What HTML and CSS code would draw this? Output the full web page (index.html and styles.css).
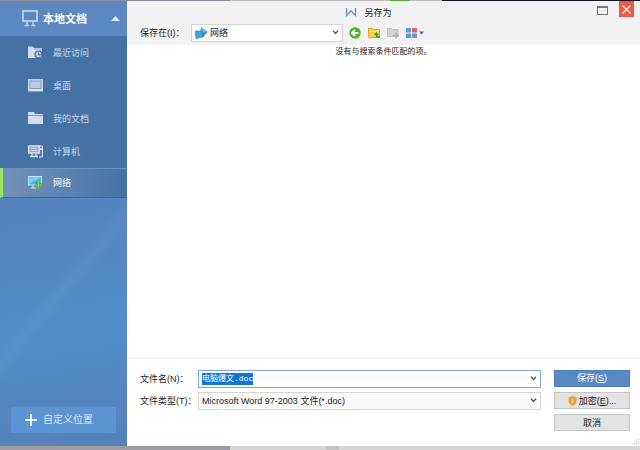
FILE: index.html
```html
<!DOCTYPE html>
<html lang="zh-CN">
<head>
    <meta charset="UTF-8">
    <meta name="viewport" content="width=device-width, initial-scale=1.0">
    <title>另存为</title>
    <link rel="stylesheet" href="styles.css">
</head>
<body>
    <div class="dialog">
        <aside class="sidebar">
            <button type="button" class="group">
                <svg class="group-icon" width="16" height="17" viewBox="0 0 16 17" fill="none" stroke="#b9d3ef">
                    <rect x="1" y="1" width="14" height="10" stroke-width="1.8"/>
                    <path d="M5 11v4M11 11v4M2.500 15.500h4.500M9 15.500h4.500" stroke-width="1.500"/>
                </svg>
                <span class="group-name">本地文档</span>
                <svg width="9" height="5" viewBox="0 0 9 5"><path d="M0 5L4.500 0L9 5z" fill="#dbe8f7"/></svg>
            </button>
            <nav class="places">
                <a class="place" href="#">
                    <svg width="15" height="13" viewBox="0 0 15 13">
                        <path d="M0 0.500h5l1 1.500h8v10H0z" fill="#cfdff1"/>
                        <path d="M6 3h8" stroke="#8dabcd"/>
                        <circle cx="10.500" cy="8.500" r="3.500" fill="#b4cae4" stroke="#3c6798" stroke-width="1.200"/>
                        <path d="M10.500 6.500v2.300h2" stroke="#35618f" fill="none"/>
                    </svg>
                    最近访问
                </a>
                <a class="place" href="#">
                    <svg width="15" height="13" viewBox="0 0 15 13">
                        <rect x="0.500" y="0.500" width="14" height="11.500" fill="#c9d9ec" stroke="#c3d6ec"/>
                        <rect x="2" y="2" width="11" height="7.500" fill="#bccde2" stroke="#7f9dc2"/>
                        <path d="M1 11h13" stroke="#e3ecf7"/>
                    </svg>
                    桌面
                </a>
                <a class="place" href="#">
                    <svg width="15" height="13" viewBox="0 0 15 13">
                        <path d="M0 0h6l1 2h8v10H0z" fill="#cfdff1"/>
                        <path d="M0 3.500h15" stroke="#7f9dc2"/>
                    </svg>
                    我的文档
                </a>
                <a class="place" href="#">
                    <svg width="15" height="13" viewBox="0 0 15 13" fill="none">
                        <path d="M10 1h4.500v11H11" fill="#5a83b3" stroke="#dbe7f5"/>
                        <rect x="0.700" y="1" width="10.500" height="7" fill="#8dabcd" stroke="#dbe7f5" stroke-width="1.400"/>
                        <path d="M3 3.500h6M3 5.500h6" stroke="#c3d6ec"/>
                        <path d="M4 8.500v3M8 8.500v3M2 11.500h8M12 4h2" stroke="#dbe7f5" stroke-width="1.300"/>
                    </svg>
                    计算机
                </a>
                <a class="place active" href="#">
                    <svg width="15" height="13" viewBox="0 0 15 13">
                        <rect x="0.500" y="0.500" width="13" height="8.500" fill="#42b6ea" stroke="#c6e1f3"/>
                        <path d="M1 1h12L1 8z" fill="#6fd2f6"/>
                        <path d="M5 9.500v2M2.500 12h6" stroke="#d5e3f2" stroke-width="1.200"/>
                        <circle cx="10.500" cy="9" r="3.500" fill="#5ba55a"/>
                        <path d="M7.500 9h6M10.500 6v6" stroke="#a8cf6a" stroke-width="0.800"/>
                    </svg>
                    网络
                </a>
            </nav>
            <button type="button" class="custom">
                <svg width="12" height="12" viewBox="0 0 12 12"><path d="M6 0v12M0 6h12" stroke="#e6f0fb" stroke-width="2"/></svg>
                自定义位置
            </button>
        </aside>

        <main class="main">
            <header class="top">
                <h1 class="title">
                    <svg width="12" height="9" viewBox="0 0 12 9" fill="none" stroke="#5c90dc" stroke-width="1.300">
                        <path d="M1.500 0v7.500L6 3l4.500 4.500V0"/>
                    </svg>
                    另存为
                </h1>
                <div class="window-buttons">
                    <button type="button" class="maximize" aria-label="最大化"></button>
                    <button type="button" class="close" aria-label="关闭">
                        <svg width="9" height="9" viewBox="0 0 9 9"><path d="M0.500 0.500l8 8M8.500 0.500l-8 8" stroke="#fff" stroke-width="1.200"/></svg>
                    </button>
                </div>
                <div class="toolbar">
                    <label class="label" for="saveIn">保存在(I)：</label>
                    <div class="combo location">
                        <svg class="location-icon" width="13" height="12" viewBox="0 0 13 12">
                            <path d="M6 0l6.500 4.500L8 10.500L5 9z" fill="#2f86c4"/>
                            <path d="M6 0l6 4.500L7 6z" fill="#6dc3ec"/>
                            <path d="M0.500 4h7v6L1 11.500z" fill="#41a6de" stroke="#2878b4" stroke-width="0.700"/>
                        </svg>
                        <select id="saveIn">
                            <option>网络</option>
                        </select>
                        <svg class="chevron" width="7" height="5" viewBox="0 0 7 5"><path d="M1 0.700l2.500 2.800L6 0.700"/></svg>
                    </div>
                    <div class="tools">
                        <button type="button" aria-label="后退">
                            <svg width="12" height="12" viewBox="0 0 12 12">
                                <circle cx="6" cy="6" r="5.700" fill="#4db320"/>
                                <path d="M9.500 6H3.500M6 3L3 6l3 3" fill="none" stroke="#fff" stroke-width="1.800"/>
                            </svg>
                        </button>
                        <button type="button" aria-label="向上一级">
                            <svg width="12" height="12" viewBox="0 0 12 12">
                                <path d="M0.500 1.500h4l1 1h6v8H0.500z" fill="#f8cf4c" stroke="#dfa92c"/>
                                <path d="M1 4.500h10" stroke="#fbe28c"/>
                                <path d="M8.500 5L5.800 8h2v2.500H12v-1.500H9.500V8h1.800z" fill="#3f9d22"/>
                            </svg>
                        </button>
                        <button type="button" aria-label="新建文件夹" disabled>
                            <svg width="12" height="12" viewBox="0 0 12 12">
                                <path d="M0.500 1.500h4l1 1h5.500v7H0.500z" fill="#d3d3d3" stroke="#c4c4c4"/>
                                <path d="M9 5.500v6M6 8.500h6" stroke="#b2b2b2" stroke-width="1.800"/>
                            </svg>
                        </button>
                        <button type="button" aria-label="视图">
                            <svg width="18" height="10" viewBox="0 0 18 10">
                                <path d="M0 0h5v4.500H0zM0 5.500h5V10H0zM6 5.500h5V10H6z" fill="#5b9bd5"/>
                                <path d="M6 0h5v4.500H6z" fill="#e5625a"/>
                                <path d="M13 3.500h5L15.500 6.500z" fill="#3c5f80"/>
                            </svg>
                        </button>
                    </div>
                </div>
            </header>

            <section class="files">
                <p class="empty">没有与搜索条件匹配的项。</p>
            </section>

            <form class="bottom">
                <label class="label" for="fileName">文件名(N)：</label>
                <div class="combo name">
                    <input type="text" id="fileName" value="电脑爆文.doc" autocomplete="off">
                    <svg class="chevron" width="7" height="5" viewBox="0 0 7 5"><path d="M1 0.700l2.500 2.800L6 0.700"/></svg>
                </div>
                <button type="button" class="btn primary">保存(<u>S</u>)</button>

                <label class="label" for="fileType">文件类型(T)：</label>
                <div class="combo type">
                    <select id="fileType">
                        <option>Microsoft Word 97-2003 文件(*.doc)</option>
                    </select>
                    <svg class="chevron" width="7" height="5" viewBox="0 0 7 5"><path d="M1 0.700l2.500 2.800L6 0.700"/></svg>
                </div>
                <button type="button" class="btn">
                    <svg width="9" height="10" viewBox="0 0 9 10">
                        <path d="M4.500 0L8.500 1.200V5.500C8.500 7.500 6.500 9 4.500 10C2.500 9 0.500 7.500 0.500 5.500V1.200z" fill="#e9a63c"/>
                        <path d="M4.500 3v4" stroke="#fbe3b0" stroke-width="1.200"/>
                    </svg>
                    <span>加密(<u>E</u>)...</span>
                </button>

                <button type="button" class="btn cancel">取消</button>
            </form>
            <svg class="grip" width="6" height="6" viewBox="0 0 6 6" fill="#b0b0b0">
                <path d="M4 0h1v1H4zM2 2h1v1H2zM4 2h1v1H4zM0 4h1v1H0zM2 4h1v1H2zM4 4h1v1H4z"/>
            </svg>
        </main>
    </div>

    <script>
        const fileName = document.getElementById('fileName');
        fileName.focus();
        fileName.select();
    </script>
</body>
</html>
```

FILE: styles.css
```css
* {
    box-sizing: border-box;
}

body {
    font-family: "Liberation Sans", "Noto Sans CJK SC", sans-serif;
    font-size: 9px;
    line-height: 14px;
    color: #222;
    margin: 0;
    padding: 1px 0 4px;
    height: 100vh;
    background:
        linear-gradient(to right, #8d8b95 36%, #b9b9b9 36%, #b9b9b9 61%, #4fae3a 61%, #4fae3a 64%, #b9b9b9 64%, #b9b9b9 69%, #15122f 69%) top / 100% 1px no-repeat,
        linear-gradient(to right, #9d9ba5 36%, #d6d6d6 36%, #d6d6d6 51%, #c4c4c4 51%, #c4c4c4 53%, #d6d6d6 53%);
}

button,
input,
select {
    font: inherit;
    color: inherit;
    margin: 0;
    padding: 0;
    border: none;
    background: none;
}

svg {
    display: block;
    flex: none;
}

.dialog {
    display: flex;
    height: 100%;
    background-color: #fff;
}

/* left panel */
.sidebar {
    width: 127px;
    flex: none;
    display: flex;
    flex-direction: column;
    background:
        linear-gradient(130deg, transparent 58%, rgba(255, 255, 255, 0.03) 61%, transparent 64%),
        linear-gradient(170deg, #5584c0 45%, #508dca 75%, #5680b8);
}

.group {
    display: flex;
    align-items: center;
    height: 35px;
    padding: 0 7px 0 22px;
    gap: 5px;
    background-color: #5b88c0;
    color: #fff;
    font-size: 11px;
    font-weight: bold;
}

.group-name {
    flex: 1;
    text-align: left;
}

.places {
    background-color: #4571a5;
}

.place {
    display: flex;
    align-items: center;
    gap: 10px;
    height: 33px;
    padding-left: 28px;
    color: #c6d9ef;
    text-decoration: none;
}

.place.active {
    height: 30px;
    padding-left: 25px;
    border-left: 3px solid #9be564;
    border-bottom: 1px solid #3d6698;
    background: linear-gradient(to right, #7292b8, #5880ae 60%, #4571a5);
    box-shadow: inset 0 1px #6b91be;
    color: #fff;
}

.custom {
    display: flex;
    align-items: center;
    gap: 6px;
    height: 26px;
    margin: auto 11px 13px;
    padding-left: 14px;
    background-color: #5c93d3;
    color: #d9e8f9;
    font-size: 10px;
}

/* right side */
.main {
    flex: 1;
    min-width: 0;
    display: flex;
    flex-direction: column;
    position: relative;
}

.top {
    height: 44px;
    background-color: #f2f2f2;
    position: relative;
}

.title {
    display: flex;
    justify-content: center;
    align-items: center;
    gap: 7px;
    height: 23px;
    margin: 0;
    padding-right: 30px;
    font-size: 9px;
    font-weight: normal;
}

.window-buttons {
    position: absolute;
    top: 0;
    right: 6px;
    display: flex;
    gap: 11px;
}

.maximize {
    width: 11px;
    height: 9px;
    margin-top: 5px;
    border: 1px solid #777;
    border-top-width: 2px;
}

.close {
    display: flex;
    justify-content: center;
    align-items: center;
    width: 15px;
    height: 16px;
    background-color: #f05a42;
}

.toolbar {
    display: flex;
    align-items: center;
    height: 17px;
    padding-left: 13px;
}

.label {
    white-space: nowrap;
}

.toolbar .label {
    width: 51px;
}

.combo {
    display: flex;
    align-items: center;
    height: 18px;
    padding: 0 3px;
    border: 1px solid #d5d5d5;
    background-color: #fff;
}

.combo input,
.combo select {
    flex: 1;
    min-width: 0;
    height: 14px;
    appearance: none;
    outline: none;
}

.chevron path {
    fill: none;
    stroke: #555;
    stroke-width: 1.3;
}

.location {
    width: 152px;
    gap: 2px;
}

.tools {
    display: flex;
    align-items: center;
    gap: 7px;
    margin-left: 6px;
}

.files {
    flex: 1;
}

.empty {
    margin: 0;
    font-size: 8px;
    text-align: center;
}

.bottom {
    display: grid;
    grid-template-columns: 51px 1fr 76px;
    grid-auto-rows: 17px;
    align-items: center;
    column-gap: 13px;
    row-gap: 5px;
    padding: 11px 10px 15px 13px;
    border-top: 1px solid #ebebeb;
}

.bottom .combo {
    margin-left: -6px;
}

.name {
    border-color: #7da7df;
}

.name input {
    font-family: "Liberation Mono", "Noto Sans CJK SC", monospace;
    font-size: 8px;
    height: 12px;
}

.name input::selection {
    background-color: #0f78d4;
    color: #fff;
}

.type {
    background-color: #fafafa;
}

.btn {
    display: flex;
    justify-content: center;
    align-items: center;
    gap: 2px;
    height: 17px;
    border: 1px solid #c3c3c3;
    background-color: #e2e3e5;
}

.btn.primary {
    display: block;
    border-color: #4c7db8;
    background-color: #5a8ac4;
    color: #fff;
    line-height: 15px;
}

.cancel {
    grid-column: 3;
}

.grip {
    position: absolute;
    right: 0;
    bottom: 1px;
}
```
